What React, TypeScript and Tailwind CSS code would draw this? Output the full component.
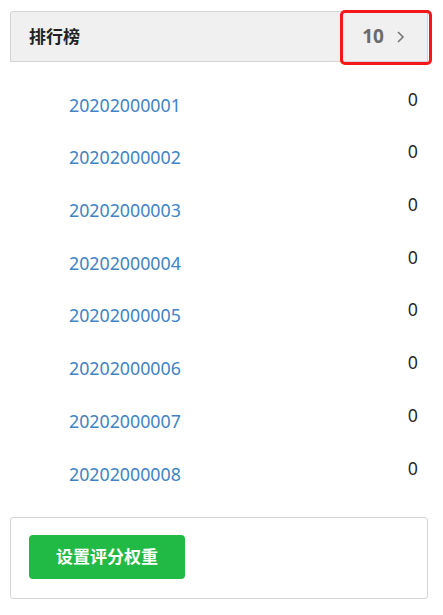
import React from "react";

const ids = [
  "20202000001",
  "20202000002",
  "20202000003",
  "20202000004",
  "20202000005",
  "20202000006",
  "20202000007",
  "20202000008",
];

export default function App() {
  return (
    <div
      className="relative w-[443px] h-[615px] bg-white px-[10px] pt-[11px] text-[rgba(0,0,0,0.87)]"
      style={{ fontFamily: '"Noto Sans", "Noto Sans CJK SC", sans-serif' }}
    >
      {/* Header */}
      <div className="w-[418px] h-[51px] flex items-center justify-between bg-[#f0f0f0] border border-[#d4d4d5] rounded-t-[3px] pl-[18px] pr-[22px]">
        <span className="text-[17px] font-bold text-[#222]">排行榜</span>
        <span className="flex items-center gap-[12px] text-[#6b6b6b]">
          <span className="text-[19px] font-bold">10</span>
          <svg width="9" height="14" viewBox="0 0 9 14" fill="none">
            <path d="M2 2l5 5-5 5" stroke="#777" strokeWidth="1.6" />
          </svg>
        </span>
      </div>

      {/* Annotation */}
      <div className="absolute left-[340px] top-[10px] w-[92px] h-[55px] border-[3px] border-[#f5181a] rounded-[5px]" />

      {/* List */}
      <div className="mt-[16.7px] w-[418px]">
        {ids.map((id) => (
          <div key={id} className="h-[52.7px] flex items-start justify-between pl-[59px] pr-[10px]">
            <span className="pt-[14px] text-[17.8px] leading-[24px] text-[#4183c4]">{id}</span>
            <span className="pt-[8px] text-[17.8px] leading-[24px]">0</span>
          </div>
        ))}
      </div>

      {/* Footer */}
      <div className="mt-[17px] w-[418px] border border-[#d4d4d5] rounded-[3px] pl-[18px] pt-[17px] pb-[19px]">
        <button className="w-[156px] h-[44px] rounded-[4px] bg-[#21ba45] text-white text-[17px] font-bold">
          设置评分权重
        </button>
      </div>
    </div>
  );
}
